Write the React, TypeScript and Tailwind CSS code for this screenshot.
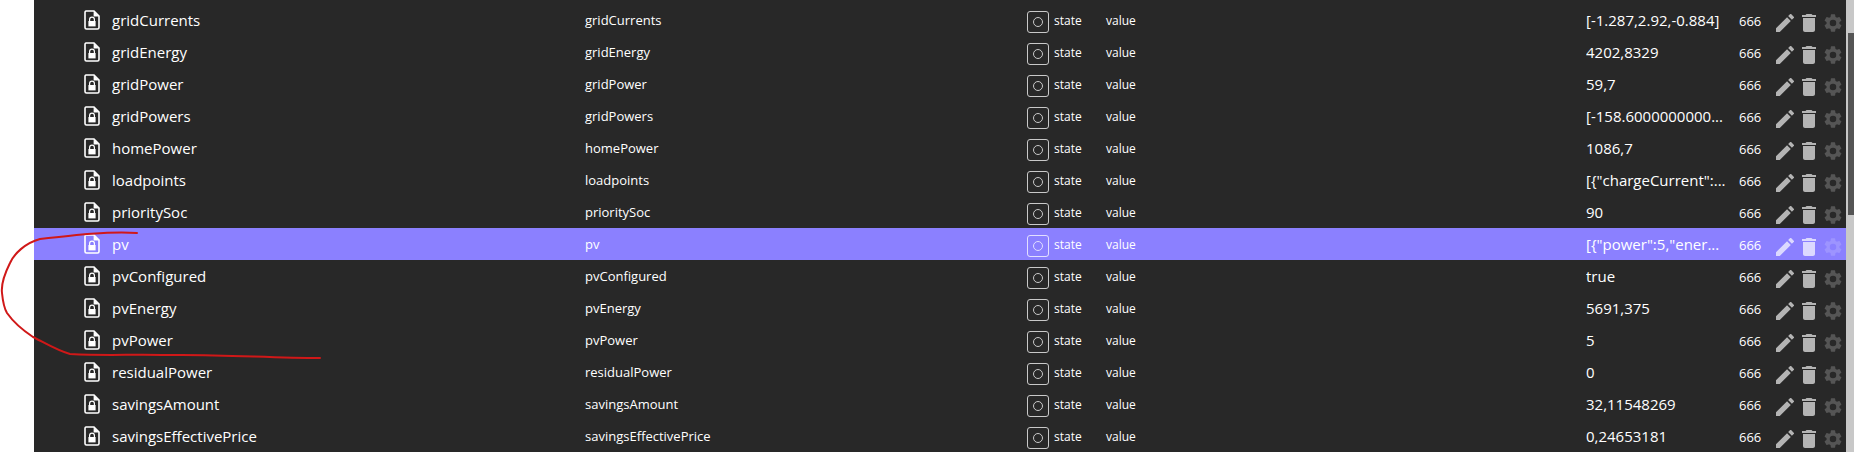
import React from 'react';

interface StateRow {
  name: string;
  value: string;
  selected?: boolean;
}

const rows: StateRow[] = [
  { name: 'gridCurrents', value: '[-1.287,2.92,-0.884]' },
  { name: 'gridEnergy', value: '4202,8329' },
  { name: 'gridPower', value: '59,7' },
  { name: 'gridPowers', value: '[-158.6000000000...' },
  { name: 'homePower', value: '1086,7' },
  { name: 'loadpoints', value: '[{"chargeCurrent":...' },
  { name: 'prioritySoc', value: '90' },
  { name: 'pv', value: '[{"power":5,"ener...', selected: true },
  { name: 'pvConfigured', value: 'true' },
  { name: 'pvEnergy', value: '5691,375' },
  { name: 'pvPower', value: '5' },
  { name: 'residualPower', value: '0' },
  { name: 'savingsAmount', value: '32,11548269' },
  { name: 'savingsEffectivePrice', value: '0,24653181' },
];

const FileLockIcon = () => (
  <svg width="16" height="20" viewBox="0 0 16 20" className="shrink-0">
    <path d="M2 1h8l5 5v11.5a1.5 1.5 0 0 1-1.5 1.5h-11A1.5 1.5 0 0 1 1 17.5v-15A1.5 1.5 0 0 1 2 1z" fill="none" stroke="currentColor" strokeWidth="1.6" />
    <path d="M9.6 1v5.600H15z" fill="currentColor" />
    <path d="M5.600 11V9.600a2.400 2.400 0 0 1 4.800 0V11" fill="none" stroke="currentColor" strokeWidth="1.2" />
    <path d="M4.400 11h7.200v5.400H4.400z" fill="currentColor" />
  </svg>
);

const PencilIcon = () => (
  <svg width="18" height="18" viewBox="3 3 18 18" fill="currentColor">
    <path d="M3 17.250V21h3.750L17.810 9.940l-3.750-3.750L3 17.250zM20.710 7.040a1 1 0 0 0 0-1.410l-2.340-2.340a1 1 0 0 0-1.410 0l-1.830 1.830 3.750 3.750 1.830-1.830z" />
  </svg>
);

const TrashIcon = () => (
  <svg width="14" height="18" viewBox="5 3 14 18" fill="currentColor">
    <path d="M6 19c0 1.100.9 2 2 2h8c1.100 0 2-.9 2-2V7H6v12zM19 4h-3.500l-1-1h-5l-1 1H5v2h14V4z" />
  </svg>
);

const GearIcon = () => (
  <svg width="18" height="18" viewBox="2 2 20 20" fill="currentColor">
    <path d="M19.140 12.940c.04-.3.06-.61.06-.94s-.02-.64-.07-.94l2.030-1.580a.49.49 0 0 0 .12-.61l-1.920-3.320a.49.49 0 0 0-.59-.22l-2.390.96a7 7 0 0 0-1.620-.94l-.36-2.540a.48.48 0 0 0-.48-.41h-3.840a.48.48 0 0 0-.47.41l-.36 2.540c-.59.24-1.130.57-1.620.94l-2.390-.96a.49.49 0 0 0-.59.22L2.740 8.870a.48.48 0 0 0 .12.61l2.030 1.580c-.05.3-.09.63-.09.94s.02.64.07.94l-2.030 1.580a.49.49 0 0 0-.12.61l1.920 3.320c.12.22.37.29.59.22l2.390-.96c.5.380 1.030.7 1.620.94l.36 2.540c.05.24.24.41.48.41h3.840c.24 0 .44-.17.47-.41l.36-2.540c.59-.24 1.130-.56 1.620-.94l2.390.96c.22.08.47 0 .59-.22l1.920-3.320a.48.48 0 0 0-.12-.61l-2.010-1.580zM12 15.600A3.600 3.600 0 1 1 12 8.400a3.600 3.600 0 0 1 0 7.200z" />
  </svg>
);

const StateBadge = () => (
  <span className="mt-[4px] flex h-[22px] w-[22px] shrink-0 items-center justify-center rounded-[3px] border border-current opacity-75">
    <span className="h-[10px] w-[10px] rounded-full border-[1.5px] border-current" />
  </span>
);

const Row = ({ row }: { row: StateRow }) => (
  <div className={`flex h-8 items-center text-white ${row.selected ? 'bg-[#8b80ff]' : ''}`}>
    <div className="flex w-[551px] items-center pl-[50px]">
      <FileLockIcon />
      <span className="ml-[12px] text-[15px]">{row.name}</span>
    </div>
    <div className="mt-[2px] w-[442px] text-[13px]">{row.name}</div>
    <div className="flex w-[79px] items-center">
      <StateBadge />
      <span className="ml-[5px] mt-[2px] text-xs">state</span>
    </div>
    <div className="mt-[2px] w-[480px] text-xs">value</div>
    <div className="w-[153px] truncate text-[15px]">{row.value}</div>
    <div className="mt-[4px] w-[37px] text-[13px]">666</div>
    <div className={`mt-[6px] flex items-center gap-2 ${row.selected ? 'text-[#dcd9ff]' : 'text-[#b4b4b4]'}`}>
      <PencilIcon />
      <TrashIcon />
      <span className={row.selected ? 'text-[#9d94ff]' : 'text-[#555555]'}>
        <GearIcon />
      </span>
    </div>
  </div>
);

export default function App() {
  return (
    <div className="relative flex h-[452px] w-[1854px] overflow-hidden bg-white font-['Open_Sans','Noto_Sans',sans-serif]">
      <div className="w-[34px] shrink-0" />
      <div className="flex-1 overflow-hidden bg-[#282828] pt-[4px]">
        {rows.map((row) => (
          <Row key={row.name} row={row} />
        ))}
      </div>
      {/* scrollbar */}
      <div className="w-2 shrink-0 bg-[#c8c8c8] pl-[2px] pt-[33px]">
        <div className="h-[182px] bg-[#555555]" />
      </div>
      {/* red marker annotation */}
      <svg className="pointer-events-none absolute left-0 top-0" width="340" height="370" fill="none">
        <path
          d="M137 233 C110 231 75 235 40 239 C25 243 14 254 10 263 C4 275 1 285 2 293 C3 303 4 308 7 313 C14 323 24 331 33 337 C45 343 58 351 70 354 C110 356 130 354 167 355 C220 354 270 358 320 358"
          stroke="#d01818"
          strokeWidth="2"
          strokeLinecap="round"
        />
      </svg>
    </div>
  );
}
